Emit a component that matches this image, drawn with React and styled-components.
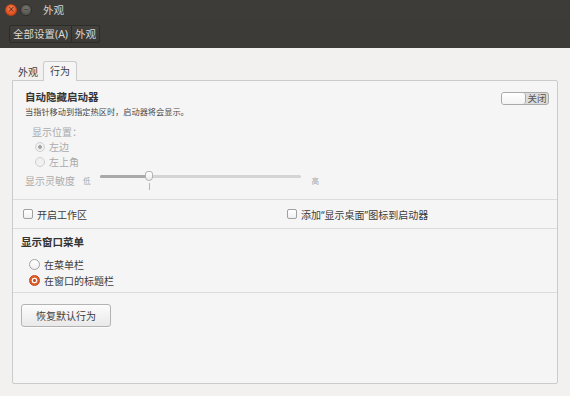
import React from 'react';
import styled, { createGlobalStyle, css } from 'styled-components';

const GlobalStyle = createGlobalStyle`
  html, body {
    margin: 0;
    padding: 0;
    background: #f2f1f0;
  }
  body {
    font-family: "Noto Sans", "Noto Sans CJK SC", "DejaVu Sans", sans-serif;
    color: #3c3c3c;
  }
`;

// Window shell
const Window = styled.div`
  width: 570px;
  height: 396px;
  display: flex;
  flex-direction: column;
  background: #f2f1f0;
  overflow: hidden;
`;

const TitleBar = styled.div`
  height: 20px;
  background: #3d3c38;
  display: flex;
  align-items: center;
  padding-left: 5px;
  gap: 3px;
  box-sizing: border-box;
`;

const WinButton = styled.div`
  width: 10px;
  height: 10px;
  border-radius: 50%;
  display: flex;
  align-items: center;
  justify-content: center;
  font-size: 8px;
  line-height: 1;
  font-family: "DejaVu Sans", sans-serif;
  ${p => p.close ? css`
    background: radial-gradient(circle at 50% 35%, #f7875c, #e24e1b 70%);
    border: 1px solid #b8421b;
    color: #5a1e08;
  ` : css`
    background: radial-gradient(circle at 50% 35%, #75746f, #56554f 70%);
    border: 1px solid #2f2e2b;
    color: #2b2a27;
  `}
`;

const WinTitle = styled.div`
  margin-left: 8px;
  font-size: 10.5px;
  color: #d8d5cd;
  line-height: 20px;
`;

const Toolbar = styled.div`
  height: 28px;
  background: #3c3b37;
  padding: 5px 0 0 9px;
  box-sizing: border-box;
  display: flex;
  align-items: flex-start;
`;

const Crumbs = styled.div`
  display: flex;
  height: 18px;
  border: 1px solid #2d2c29;
  border-radius: 2px;
  box-sizing: border-box;
  background: linear-gradient(#42413d, #3a3935);
`;

const Crumb = styled.div`
  padding: 0 3px;
  font-size: 10.5px;
  line-height: 16px;
  color: #dcdad5;
  & + & {
    border-left: 1px solid #2d2c29;
  }
`;

// Body / notebook
const Body = styled.div`
  flex: 1;
  display: flex;
  flex-direction: column;
  padding: 14px 12px 12px 12px;
  min-height: 0;
`;

const TabBar = styled.div`
  display: flex;
  align-items: flex-end;
  height: 19px;
  margin-bottom: -1px;
  position: relative;
  z-index: 1;
`;

const Tab = styled.div`
  box-sizing: border-box;
  font-size: 10px;
  line-height: 18px;
  color: #3c3c3c;
  ${p => p.active ? css`
    height: 20px;
    padding: 0 6px;
    background: #f5f5f5;
    border: 1px solid #cbcbcb;
    border-bottom: none;
    border-radius: 3px 3px 0 0;
    line-height: 19px;
  ` : css`
    height: 19px;
    padding: 0 5px 0 6px;
    line-height: 21px;
  `}
`;

const Panel = styled.div`
  flex: 1;
  background: #f5f5f5;
  border: 1px solid #cbcbcb;
  border-radius: 0 2px 2px 2px;
  display: flex;
  flex-direction: column;
`;

const Section = styled.div`
  padding: ${p => p.pad};
  & + & {
    border-top: 1px solid #dcdcdc;
  }
`;

const HeaderRow = styled.div`
  display: flex;
  justify-content: space-between;
  align-items: flex-start;
`;

const Heading = styled.div`
  font-size: 10.5px;
  font-weight: bold;
  line-height: 14px;
  color: #333;
`;

const Hint = styled.div`
  font-size: 8.2px;
  line-height: 12px;
  margin-top: 2px;
  color: #4a4a4a;
`;

const Switch = styled.div`
  display: flex;
  width: 48px;
  height: 13px;
  margin-top: 2px;
  border: 1px solid #a9a9a9;
  border-radius: 3px;
  background: #dcdcdc;
  box-sizing: border-box;
  overflow: hidden;
`;

const SwitchKnob = styled.div`
  width: 23px;
  background: linear-gradient(#ffffff, #f3f3f3);
  border-right: 1px solid #a9a9a9;
  border-radius: 0 3px 3px 0;
`;

const SwitchLabel = styled.div`
  flex: 1;
  text-align: center;
  font-size: 9.5px;
  line-height: 11px;
  color: #555;
`;

const SubLabel = styled.div`
  font-size: 10px;
  line-height: 14px;
  margin: 7px 0 0 7px;
  color: ${p => (p.disabled ? '#ababab' : '#3c3c3c')};
`;

const RadioRow = styled.div`
  display: flex;
  align-items: center;
  height: ${p => p.h}px;
  padding-left: ${p => p.indent}px;
  gap: 4px;
  font-size: 10px;
  color: ${p => (p.disabled ? '#ababab' : '#3c3c3c')};
`;

const Radio = styled.span`
  width: 10px;
  height: 10px;
  border-radius: 50%;
  box-sizing: border-box;
  flex-shrink: 0;
  ${p => {
    if (p.disabled) {
      return css`
        border: 1px solid #cfcfcf;
        background: ${p.checked
          ? 'radial-gradient(circle, #a6a6a6 0 1.6px, #f1f1f1 2.2px)'
          : '#f1f1f1'};
      `;
    }
    if (p.checked) {
      return css`
        width: 11px;
        height: 11px;
        border: 1px solid #c4461a;
        background: radial-gradient(circle, #c94d1f 0 1.2px, #ffffff 1.8px 2.6px, #e45b26 3.2px);
      `;
    }
    return css`
      width: 11px;
      height: 11px;
      border: 1px solid #a4a4a4;
      background: linear-gradient(#ffffff, #f0f0f0);
    `;
  }}
`;

const SliderRow = styled.div`
  display: flex;
  align-items: center;
  height: 20px;
  margin-top: 1px;
  font-size: 10px;
  color: #ababab;
`;

const Small = styled.span`
  font-size: 7.5px;
  color: #a8a8a8;
  margin-left: ${p => p.ml}px;
`;

const SliderBox = styled.div`
  position: relative;
  width: 201px;
  height: 20px;
  margin-left: ${p => p.ml}px;
`;

const Track = styled.div`
  position: absolute;
  left: 0;
  right: 0;
  top: 5px;
  height: 3px;
  border-radius: 2px;
  background: #d4d4d4;
`;

const TrackFill = styled.div`
  position: absolute;
  left: 0;
  top: 0;
  bottom: 0;
  border-radius: 2px;
  background: #a9a9a9;
`;

const Knob = styled.div`
  position: absolute;
  top: 1px;
  width: 8px;
  height: 10px;
  margin-left: -4px;
  box-sizing: border-box;
  border: 1px solid #b2b2b2;
  border-radius: 3px 3px 4px 4px;
  background: linear-gradient(#ffffff, #ececec);
`;

const Tick = styled.div`
  position: absolute;
  top: 13px;
  width: 1px;
  height: 7px;
  background: #b5b5b5;
`;

const CheckGrid = styled.div`
  display: grid;
  grid-template-columns: 264px 1fr;
  align-items: center;
  height: 28px;
  padding-left: 10px;
`;

const CheckItem = styled.label`
  display: flex;
  align-items: center;
  gap: 4px;
  font-size: 10px;
  color: #3c3c3c;
`;

const Box = styled.span`
  width: 10px;
  height: 10px;
  box-sizing: border-box;
  border: 1px solid #a0a0a0;
  border-radius: 2px;
  background: linear-gradient(#ffffff, #f0f0f0);
  flex-shrink: 0;
`;

const Button = styled.button`
  width: 90px;
  height: 23px;
  padding: 0;
  border: 1px solid #b3b3b3;
  border-radius: 3px;
  background: linear-gradient(#fcfcfc, #e9e9e9);
  font-family: inherit;
  font-size: 10px;
  color: #3c3c3c;
  box-shadow: 0 1px 0 rgba(255, 255, 255, 0.7);
`;

const Sensitivity = ({ value }) => (
  <SliderRow>
    <span>显示灵敏度</span>
    <Small ml={8}>低</Small>
    <SliderBox ml={9}>
      <Track>
        <TrackFill style={{ width: `${value}%` }} />
      </Track>
      <Knob style={{ left: `${value}%` }} />
      <Tick style={{ left: `${value}%` }} />
    </SliderBox>
    <Small ml={11}>高</Small>
  </SliderRow>
);

const App = () => (
  <Window>
    <GlobalStyle />
    <TitleBar>
      <WinButton close>×</WinButton>
      <WinButton>–</WinButton>
      <WinTitle>外观</WinTitle>
    </TitleBar>
    <Toolbar>
      <Crumbs>
        <Crumb>全部设置(A)</Crumb>
        <Crumb>外观</Crumb>
      </Crumbs>
    </Toolbar>
    <Body>
      <TabBar>
        <Tab>外观</Tab>
        <Tab active>行为</Tab>
      </TabBar>
      <Panel>
        <Section pad="9px 8px 9px 12px">
          <HeaderRow>
            <div>
              <Heading>自动隐藏启动器</Heading>
              <Hint>当指针移动到指定热区时，启动器将会显示。</Hint>
            </div>
            <Switch>
              <SwitchKnob />
              <SwitchLabel>关闭</SwitchLabel>
            </Switch>
          </HeaderRow>
          <SubLabel disabled>显示位置：</SubLabel>
          <RadioRow h={15} indent={10} disabled>
            <Radio disabled checked />
            左边
          </RadioRow>
          <RadioRow h={15} indent={10} disabled>
            <Radio disabled />
            左上角
          </RadioRow>
          <Sensitivity value={24.5} />
        </Section>
        <Section pad="0">
          <CheckGrid>
            <CheckItem>
              <Box />
              开启工作区
            </CheckItem>
            <CheckItem>
              <Box />
              添加“显示桌面”图标到启动器
            </CheckItem>
          </CheckGrid>
        </Section>
        <Section pad="6px 8px 4px 8px">
          <Heading>显示窗口菜单</Heading>
          <div style={{ height: 7 }} />
          <RadioRow h={16} indent={8}>
            <Radio />
            在菜单栏
          </RadioRow>
          <RadioRow h={16} indent={8}>
            <Radio checked />
            在窗口的标题栏
          </RadioRow>
        </Section>
        <Section pad="10px 8px">
          <Button>恢复默认行为</Button>
        </Section>
      </Panel>
    </Body>
  </Window>
);

export default App;
